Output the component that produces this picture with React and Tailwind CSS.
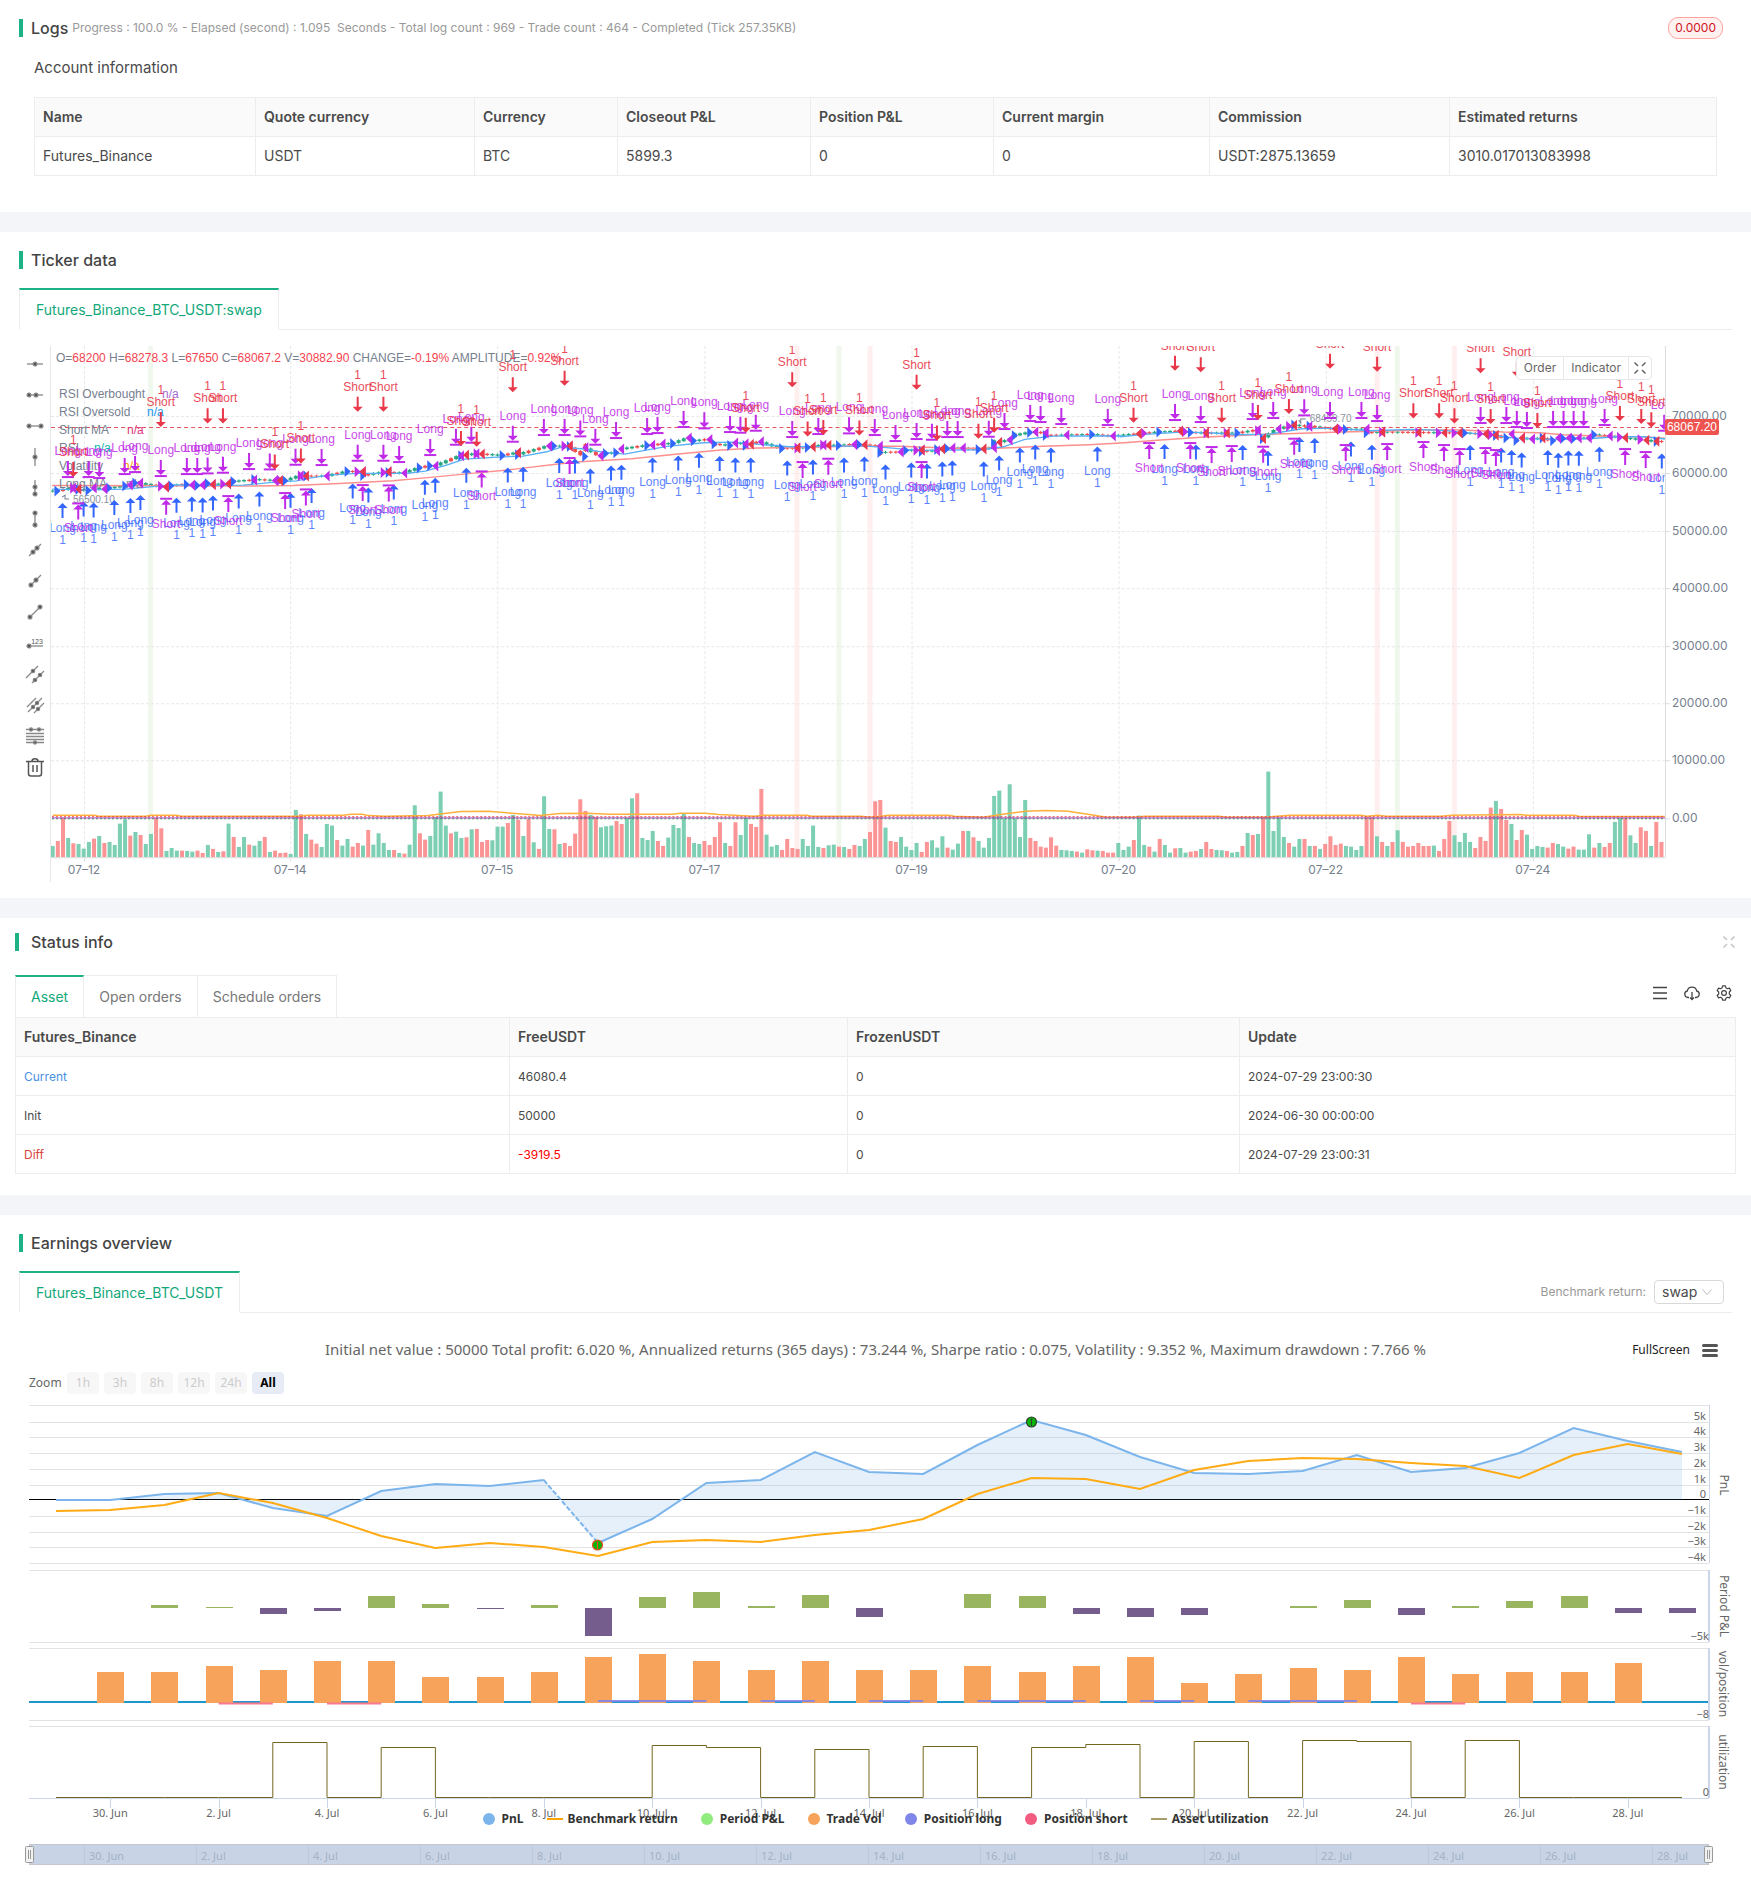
import React from "react";

const RED = "#e8384a";
const PURPLE = "#bf2be8";
const BLUE = "#3366ff";
const UP = "#26a981";
const DOWN = "#ef4f4f";

/* ---------- volume: bar tops, negative marks a falling candle ---------- */
const VOL_A = [
  918, -903, -834, 894, -910, 912, 926, 906, -896, 888, -909, 906, 915, 851, 838, -887, 876, -885, 912, 882,
  -834, -865, 933, 924, 932, -932, 933, 935, -932, -939, 915, -927, 936, -934, 851, -891, 921, 891, -914, 917,
  903, -891, 936, -932, -939, -938, 942, 810, -823, 882, -899, -911, 921, 852, 857, -900, 917, 897, -920, -909,
  917, -870, 914, 880, 909, 930, -930, 939, -941, 914, 796, -880, -899, 888, 832, 755, 857, -880, 875, 894,
  -892, 868, -867, -906, -900, 901, 860, 860, -849, 825, -839, 888, -837, 907, -927, 769, 867, -868, 912, -909,
  -918, -881, -778, -813, 825, -832, 862, 859, 857, -843, -852, 834, 775, -760, 894, 900, 873, -903, -918, 893,
  855, 864, 820, -891, 909, 912, -903, -915, -891, -847, 909, -918, -847, 885, 834, -852, -861, -747, 884, 920,
  915, -930, -897, -924, -927, 897, 918, 857, 921, -924, 916, 914, -920, 921, -927, -915, 918,
];
const VOL_B = [
  297, -276, -184, -180, 263, -303, -306, 291, 320, 330, 309, -336, -306, 301, 323, 289, -323, 329, 311, -273,
  273, -292, 303, 323, 294, 168, 152, 236, 133, 236, 291, 180, -294, -303, -320, -323, -292, -317, 330, 331,
  333, -335, 338, -328, -331, 332, -333, -338, -338, 309, 330, 320, -300, 227, 315, -320, 335, -297, 315, 338,
  -325, 324, 338, -335, -333, 327, -306, -327, 330, 331, -333, 338, 336, -318, 279, -285, 282, -230, 95, 273,
  233, 291, -309, 320, 297, -297, 318, -318, 327, -312, -289, -315, -311, 318, 320, 330, 318, -232, -232, 289,
  -306, 318, -306, 271, -306, -320, -318, -309, -318, -318, 317, -333, -297, -243, 286, 306, 279, 306, -324, -291,
  -303, -203, 183, -207, -240, 252, -300, -270, 284, 327, 318, 321, -323, -309, 312, 320, -326, -320, 329, 329,
  283, -323, 309, -321, -309, 246, 235, -235, 286, 309, -262, -273, 318, -246, -306,
];
const VOLUME = [
  ...VOL_A.map((v) => ({ h: (952 - Math.abs(v)) / 3, up: v > 0 })),
  ...VOL_B.map((v) => ({ h: (352 - Math.abs(v)) / 3, up: v > 0 })),
];
const barX = (i) => 52.65 + i * 5.17;

/* ---------- trades: three stretches of the time axis ---------- */
const STRETCH = [
  { x0: 0, k: 2.8 },
  { x0: 560, k: 2.8 },
  { x0: 1120, k: 2.485 },
];
const place = (lists, y0 = 340) =>
  lists.flatMap((list, s) => list.map(([x, y]) => [STRETCH[s].x0 + x / STRETCH[s].k, y0 + y / 3]));

const SHORT_ENTRY = place([
  [[205, 411], [450, 261], [581, 250], [624, 250], [769, 388], [842, 370], [1001, 215], [1073, 215], [1290, 318], [1334, 320], [1435, 157]],
  [[12, 137], [519, 278], [649, 142], [692, 289], [736, 285], [837, 286], [997, 149], [1054, 301], [1170, 296], [1214, 278]],
  [[32, 248], [135, 92], [199, 97], [251, 248], [341, 240], [418, 222], [520, 86], [637, 95], [727, 235], [791, 235], [829, 250], [894, 100], [919, 252], [984, 110], [1035, 264], [1240, 243], [1293, 252], [1318, 262]],
]);
const LONG_EXIT = place([
  [[190, 411], [248, 411], [278, 414], [349, 402], [378, 396], [450, 408], [523, 402], [552, 402], [581, 400], [624, 398], [697, 387], [755, 388], [827, 374], [900, 375], [1001, 362], [1073, 362], [1117, 366], [1204, 345], [1276, 314], [1319, 308], [1435, 305], [1522, 285]],
  [[12, 285], [56, 289], [98, 314], [156, 294], [243, 282], [272, 279], [345, 261], [403, 265], [475, 276], [504, 278], [547, 272], [649, 291], [722, 282], [808, 280], [880, 285], [938, 303], [997, 297], [1040, 299], [1083, 291], [1112, 291], [1199, 290], [1243, 267], [1315, 243], [1344, 246], [1402, 252], [1532, 255]],
  [[135, 240], [199, 246], [328, 237], [379, 234], [456, 226], [520, 234], [598, 234], [637, 243], [894, 249], [958, 249], [984, 261], [1009, 264], [1074, 261], [1100, 261], [1125, 261], [1150, 261], [1202, 255], [1350, 272]],
]);
const LONG_ENTRY = place([
  [[175, 489], [234, 484], [262, 487], [320, 480], [365, 474], [393, 465], [494, 473], [537, 469], [567, 472], [596, 466], [668, 460], [726, 454], [813, 458], [872, 444], [987, 430], [1031, 442], [1102, 433], [1189, 419], [1218, 413], [1305, 383], [1421, 382], [1464, 380], [1565, 354]],
  [[41, 355], [84, 385], [142, 376], [171, 374], [258, 352], [330, 346], [388, 338], [446, 348], [490, 352], [533, 352], [635, 361], [707, 358], [794, 352], [851, 349], [910, 373], [982, 367], [1026, 370], [1069, 364], [1097, 361], [1185, 364], [1228, 346], [1286, 322], [1329, 313], [1373, 322], [1503, 319]],
  [[109, 312], [187, 313], [303, 315], [366, 332], [444, 291], [482, 294], [572, 304], [624, 314], [868, 315], [945, 322], [971, 330], [996, 337], [1061, 330], [1087, 338], [1112, 331], [1138, 332], [1189, 320], [1344, 340]],
]);
const SHORT_EXIT = place([
  [[219, 490], [465, 476], [639, 468], [798, 459], [856, 448], [1015, 435], [1088, 436], [1348, 394]],
  [[26, 354], [678, 366], [750, 356], [1011, 366]],
  [[71, 309], [173, 309], [226, 321], [276, 318], [354, 320], [431, 296], [559, 315], [662, 312], [752, 306], [803, 315], [842, 327], [906, 324], [932, 330], [1253, 327], [1304, 336]],
]);
const LONG_MA = place([
  [[146, 436], [450, 437], [700, 438], [820, 436], [950, 430], [1100, 422], [1204, 412], [1320, 400], [1435, 388]],
  [[0, 371], [56, 365], [200, 356], [330, 342], [450, 330], [550, 324], [700, 322], [800, 319], [950, 319], [1100, 325], [1220, 325], [1350, 319], [1480, 314]],
  [[0, 309], [100, 300], [200, 292], [330, 284], [450, 280], [550, 276], [637, 274], [750, 270], [850, 270], [950, 276], [1040, 278], [1100, 284], [1200, 289], [1300, 291], [1353, 295]],
]);
const SHORT_MA = place([
  [[146, 447], [250, 449], [350, 447], [420, 440], [480, 434], [600, 436], [680, 435], [770, 426], [830, 422], [870, 413], [930, 404], [1000, 400], [1140, 400], [1190, 393], [1250, 375], [1300, 357], [1380, 352], [1464, 348], [1530, 335]],
  [[0, 322], [60, 326], [120, 336], [180, 342], [240, 330], [300, 319], [400, 308], [480, 306], [560, 313], [640, 320], [800, 318], [860, 318], [930, 324], [1000, 331], [1180, 329], [1240, 320], [1300, 298], [1380, 288], [1568, 287]],
  [[0, 290], [60, 283], [150, 276], [220, 278], [290, 284], [370, 282], [450, 266], [520, 264], [620, 272], [720, 268], [800, 271], [900, 283], [980, 294], [1080, 298], [1160, 296], [1230, 290], [1300, 290], [1353, 297]],
]);
const VOLATILITY = [
  ...[[96, 825], [172, 825], [180, 828], [265, 828], [275, 825], [322, 825], [330, 828], [545, 828], [560, 825], [625, 825], [640, 822], [660, 822], [668, 825], [700, 828], [780, 826], [810, 820], [840, 814], [890, 813], [940, 820], [985, 826], [1020, 820], [1070, 819], [1110, 822], [1225, 822], [1240, 819], [1285, 819], [1310, 823], [1375, 828], [1390, 825], [1470, 825], [1480, 828], [1560, 828]].map(([x, y]) => [x / 1.8233, 540 + y / 3]),
  ...[[0, 228], [20, 231], [50, 225], [155, 225], [165, 228], [215, 231], [250, 222], [290, 213], [325, 211], [365, 213], [400, 222], [430, 230], [480, 231], [500, 228], [630, 228], [645, 231], [710, 231], [755, 225], [880, 225], [890, 228], [910, 225], [925, 228], [1020, 228], [1040, 225], [1160, 223], [1170, 225], [1255, 225], [1265, 229], [1415, 229]].map(([x, y]) => [860 + x / 1.76, 740 + y / 3]),
];

/* close price, read back from where the trades sit */
const PRICE = [
  ...LONG_ENTRY.map(([x, y]) => [x - 5, y - 12]),
  ...LONG_EXIT.map(([x, y]) => [x + 5, y + 11]),
].sort((a, b) => a[0] - b[0]);
function priceAt(x) {
  if (x <= PRICE[0][0]) return PRICE[0][1];
  for (let i = 1; i < PRICE.length; i++) {
    if (x <= PRICE[i][0]) {
      const [ax, ay] = PRICE[i - 1];
      const [bx, by] = PRICE[i];
      return bx === ax ? by : ay + ((by - ay) * (x - ax)) / (bx - ax);
    }
  }
  return PRICE[PRICE.length - 1][1];
}

const pts = (list) => list.map(([x, y]) => `${x.toFixed(1)},${y.toFixed(1)}`).join(" ");
const DownArrow = ({ x, y, c }) => (
  <path d={`M${x - 1} ${y - 15}h2v10h4l-5 5l-5 -5h4z`} fill={c} />
);
const UpArrow = ({ x, y, c }) => (
  <path d={`M${x - 1} ${y + 15}h2v-10h4l-5 -5l-5 5h4z`} fill={c} />
);
const RightTri = ({ x, y, c }) => <path d={`M${x - 3} ${y - 5.5}l6 5.5l-6 5.5z`} fill={c} />;
const LeftTri = ({ x, y, c }) => <path d={`M${x + 3} ${y - 5.5}l-6 5.5l6 5.5z`} fill={c} />;

const TICKER_DATES = [[84, "07–12"], [290, "07–14"], [497, "07–15"], [704, "07–17"], [911, "07–19"], [1118, "07–20"], [1325, "07–22"], [1532, "07–24"]];
const TICKER_LEVELS = [[416, "70000.00"], [473, "60000.00"], [531, "50000.00"], [588, "40000.00"], [646, "30000.00"], [703, "20000.00"], [760, "10000.00"], [818, "0.00"]];
const BANDS = [[148, "#f0f8ee"], [794, "#ffefef"], [836, "#f0f8ee"], [867, "#ffefef"], [1374, "#ffefef"], [1394, "#f0f8ee"], [1451, "#ffefef"]];
const OHLC = [["O=", "68200"], [" H=", "68278.3"], [" L=", "67650"], [" C=", "68067.2"], [" V=", "30882.90"], [" CHANGE=", "-0.19%"], [" AMPLITUDE=", "0.92%"]];
const INDICATORS = [
  [394, "RSI Overbought", 162, "#a66bd3"],
  [412, "RSI Oversold", 147, "#2196f3"],
  [430, "Short MA", 127, "#e0367c"],
  [448, "RSI", 94, "#12b5b0"],
  [466, "Volatility", 123, "#ff9600"],
  [484, "Long MA", 126, "#8a7aa0"],
];

function TickerChart() {
  return (
    <svg viewBox="50 346 1681 536" className="block w-full" fontFamily='"Liberation Sans", Arial, sans-serif' fontSize="12" role="img" aria-label="BTC_USDT swap price chart">
      <defs>
        <clipPath id="plot"><rect x="51" y="346" width="1613" height="512" /></clipPath>
      </defs>
      {BANDS.map(([x, c]) => <rect key={x} x={x} y="346" width="5" height="511" fill={c} />)}
      <g stroke="#e8e8e8" strokeDasharray="3 2" fill="none">
        {TICKER_LEVELS.map(([y]) => <path key={y} d={`M51 ${y + 0.5}H1664`} />)}
        {TICKER_DATES.map(([x]) => <path key={x} d={`M${x + 0.5} 346V857`} />)}
      </g>
      <path d="M50.5 346V882" stroke="#e6e6e6" />
      <g clipPath="url(#plot)">
        {VOLUME.map((v, i) => (
          <rect key={i} x={barX(i) - 2} y={857 - v.h} width="4" height={v.h} fill={v.up ? "#7ccfb3" : "#fb9495"} />
        ))}
        <polyline points={pts(VOLATILITY)} fill="none" stroke="#fdb03c" strokeWidth="1.5" />
        <path d="M52 816.5H1664" stroke="#e84040" strokeDasharray="2 2" />
        <path d="M52 818.5H1664" stroke="#2f9e4f" strokeDasharray="2 2" />
        <path d="M52 817.5H1664" stroke="#a03bc0" strokeWidth="1.2" opacity="0.75" />
        {VOLUME.map((v, i) => {
          const x = barX(i);
          const y = priceAt(x);
          const body = Math.abs(priceAt(x + 2.5) - priceAt(x - 2.5)) + 1;
          return (
            <g key={i} fill={v.up ? UP : DOWN}>
              <rect x={x - 2} y={y - body / 2} width="4" height={body} />
              <rect x={x - 0.5} y={y - body / 2 - 1} width="1" height={body + 2} />
            </g>
          );
        })}
        <polyline points={pts(LONG_MA)} fill="none" stroke="#fd8f8c" strokeWidth="1.5" />
        <polyline points={pts(SHORT_MA)} fill="none" stroke="#58b0f5" strokeWidth="1.3" />
      </g>
      <path d="M51 427.5H1664" stroke="#e4555c" strokeDasharray="4 3" />
      <g fill="#76808f">
        <text x="56" y="362" xmlSpace="preserve">
          {OHLC.map(([k, v]) => (
            <React.Fragment key={k}><tspan>{k}</tspan><tspan fill="#f5434f">{v}</tspan></React.Fragment>
          ))}
        </text>
        {INDICATORS.map(([y, name, x, c]) => (
          <g key={name}>
            <text x="59" y={y + 4}>{name}</text>
            <text x={x} y={y + 4} fill={c}>n/a</text>
          </g>
        ))}
        <text x="73" y="503" fontSize="10" fill="#8b93a0">56500.10</text>
        <path d="M62 497l3 -2v4h4" fill="none" stroke="#76808f" />
        <text x="1309" y="422" fontSize="10" fill="#8b93a0">68459.70</text>
        <path d="M1298 420l2 3v-4h5" fill="none" stroke="#76808f" />
      </g>
      <g clipPath="url(#plot)" textAnchor="middle">
        {LONG_ENTRY.map(([x, y], i) => (
          <g key={i} fill={BLUE}>
            <RightTri x={x - 5} y={y - 12} c={BLUE} />
            <UpArrow x={x} y={y} c={BLUE} />
            <text x={x} y={y + 29} opacity="0.8">Long</text>
            <text x={x} y={y + 41} opacity="0.8">1</text>
          </g>
        ))}
        {SHORT_EXIT.map(([x, y], i) => (
          <g key={i} fill={PURPLE}>
            <RightTri x={x - 5} y={priceAt(x - 5)} c={PURPLE} />
            <rect x={x - 6} y={y - 1} width="12" height="2" />
            <UpArrow x={x} y={y + 1} c={PURPLE} />
            <text x={x} y={y + 29} opacity="0.85">Short</text>
          </g>
        ))}
        {LONG_EXIT.map(([x, y], i) => (
          <g key={i} fill={PURPLE}>
            <LeftTri x={x + 5} y={y + 11} c={PURPLE} />
            <rect x={x - 6} y={y - 1} width="12" height="2" />
            <DownArrow x={x} y={y - 1} c={PURPLE} />
            <text x={x} y={y - 22} opacity="0.85">Long</text>
          </g>
        ))}
        {SHORT_ENTRY.map(([x, y], i) => (
          <g key={i} fill={RED}>
            <LeftTri x={x + 5} y={priceAt(x + 5)} c={RED} />
            <DownArrow x={x} y={y} c={RED} />
            <text x={x} y={y - 21} opacity="0.9">Short</text>
            <text x={x} y={y - 33} opacity="0.9">1</text>
          </g>
        ))}
      </g>
      <path d="M51 857.5H1664.5M1664.5 346V857" stroke="#dcdcdc" fill="none" />
      <g fill="#76808f" fontFamily='Inter, "Liberation Sans", sans-serif'>
        {TICKER_LEVELS.map(([y, t]) => (
          <g key={t}>
            <path d={`M1665 ${y + 0.5}h4`} stroke="#dcdcdc" />
            <text x="1671" y={y + 4}>{t}</text>
          </g>
        ))}
        {TICKER_DATES.map(([x, t]) => (
          <g key={t}>
            <path d={`M${x + 0.5} 858v3`} stroke="#dcdcdc" />
            <text x={x} y="874" textAnchor="middle">{t}</text>
          </g>
        ))}
      </g>
      <rect x="1664" y="419" width="54" height="16" rx="2" fill="#ef5350" />
      <text x="1666" y="431" fill="#fff">68067.20</text>
    </svg>
  );
}

/* ---------- drawing tools ---------- */
const TOOLS = [
  ["Horizontal line", <><path d="M2 10h16" /><circle cx="10" cy="10" r="1.9" /></>],
  ["Horizontal ray", <><path d="M3 10h15" /><circle cx="4" cy="10" r="1.9" /><circle cx="11" cy="10" r="1.9" /></>],
  ["Horizontal segment", <><path d="M3 10h14" /><circle cx="4" cy="10" r="1.9" /><circle cx="16" cy="10" r="1.9" /></>],
  ["Vertical line", <><path d="M10 1v18" /><circle cx="10" cy="10" r="1.9" /></>],
  ["Vertical ray", <><path d="M10 2v15" /><circle cx="10" cy="9" r="1.9" /><circle cx="10" cy="16" r="1.9" /></>],
  ["Vertical segment", <><path d="M10 4v13" /><circle cx="10" cy="4" r="1.9" /><circle cx="10" cy="16" r="1.9" /></>],
  ["Straight line", <><path d="M4 16L16 4" /><circle cx="8" cy="12" r="1.9" /><circle cx="12" cy="8" r="1.9" /></>],
  ["Ray", <><path d="M5 15L16 4" /><circle cx="6" cy="14" r="1.9" /><circle cx="11" cy="9" r="1.9" /></>],
  ["Segment", <><path d="M5 15L15 5" /><circle cx="5" cy="15" r="1.9" /><circle cx="15" cy="5" r="1.9" /></>],
  ["Price line", <><path d="M3 13h15" /><circle cx="4" cy="13" r="1.9" /><text x="12" y="11" fontSize="7" stroke="none" textAnchor="middle" fontFamily="Liberation Sans">123</text></>],
  ["Price channel", <><path d="M1 14L13 2M7 19L19 7" /><circle cx="8" cy="7" r="1.7" /><circle cx="10" cy="16" r="1.7" /><circle cx="15" cy="11" r="1.7" /></>],
  ["Parallel lines", <><path d="M2 12L11 3M3 17L17 3M9 18L19 8" /><circle cx="8" cy="12" r="1.6" /><circle cx="12" cy="8" r="1.6" /><circle cx="13" cy="14" r="1.6" /></>],
  ["Fibonacci lines", <><path d="M1 3.5h18M1 7.5h18M1 10.5h18M1 13.500h18M1 16.500h18" /><circle cx="6" cy="3.5" r="1.5" /><circle cx="14" cy="3.5" r="1.5" /><circle cx="10" cy="16.500" r="1.5" /></>],
  ["Remove drawings", <path d="M1 4.5h18M7 4c0-3 6-3 6 0M3.5 5v11.500q0 2.500 2.500 2.500h8q2.500 0 2.500-2.500V5M8 8v7M12 8v7" fill="none" stroke="#555" strokeWidth="1.500" />],
];

function Heading({ children, className = "" }) {
  return (
    <div className={"flex h-[18px] items-center border-l-4 border-[#1db286] text-base font-medium text-[#444] " + className}>
      {children}
    </div>
  );
}

const ExpandIcon = ({ className }) => (
  <svg viewBox="0 0 14 14" className={className} fill="none" stroke="currentColor" strokeWidth="1.500">
    <path d="M1.500 1.500L5 5M12.500 1.500L9 5M1.500 12.500L5 9M12.500 12.500L9 9" />
  </svg>
);

const ACCOUNT = [
  ["Name", "Futures_Binance", "w-[221px]"],
  ["Quote currency", "USDT", "w-[219px]"],
  ["Currency", "BTC", "w-[143px]"],
  ["Closeout P&L", "5899.3", "w-[193px]"],
  ["Position P&L", "0", "w-[183px]"],
  ["Current margin", "0", "w-[216px]"],
  ["Commission", "USDT:2875.13659", "w-[240px]"],
  ["Estimated returns", "3010.017013083998", ""],
];

const STATUS = [
  ["Current", "46080.4", "0", "2024-07-29 23:00:30", "text-[#4a90e2]", ""],
  ["Init", "50000", "0", "2024-06-30 00:00:00", "", ""],
  ["Diff", "-3919.5", "0", "2024-07-29 23:00:31", "text-[#d9453d]", "text-[#ff0000]"],
];

/* ---------- earnings ---------- */
const DAY = 54.2;
const dayX = (i) => 56 + DAY * i;
const PNL = [1500, 1500, 1494, 1493, 1508, 1516, 1491, 1484, 1486, 1480, 1543, 1519, 1483, 1480, 1452, 1472, 1474, 1445, 1420, 1435, 1457, 1473, 1474, 1471, 1455, 1472, 1468, 1453, 1428, 1441, 1452];
const BENCH = [1511, 1510, 1505, 1493, 1503, 1518, 1536, 1548, 1543, 1547, 1556, 1542, 1540, 1542, 1535, 1530, 1519, 1494, 1478, 1479, 1489, 1470, 1461, 1458, 1459, 1463, 1466, 1478, 1455, 1444, 1454];
const PERIOD = [0, 0, 3, 1, -6, -3, 12, 4, -1, 3, -28, 11, 16, 2, 13, -9, 0, 14, 12, -6, -9, -7, 0, 2, 8, -7, 2, 7, 12, -5, -5];
const TRADES = [0, 30, 30, 36, 32, 41, 41, 25, 25, 30, 45, 48, 41, 32, 41, 32, 32, 36, 30, 36, 45, 19, 28, 34, 32, 45, 28, 30, 30, 39, 0];
const UTIL = [0, 0, 0, 0, 55, 0, 50, 0, 0, 0, 0, 52, 50, 0, 48, 0, 51, 0, 50, 53, 0, 56, 0, 57, 56, 0, 57, 0, 0, 0, 0];
const LEVELS = [1405, 1422, 1437, 1453, 1469, 1485, 1516, 1532, 1547, 1563, 1570, 1642, 1648, 1720, 1726];
const PNL_LABELS = [[1416, "5k"], [1431, "4k"], [1447, "3k"], [1463, "2k"], [1479, "1k"], [1494, "0"], [1510, "−1k"], [1526, "−2k"], [1541, "−3k"], [1557, "−4k"]];
const DATES = ["30. Jun", "2. Jul", "4. Jul", "6. Jul", "8. Jul", "10. Jul", "12. Jul", "14. Jul", "16. Jul", "18. Jul", "20. Jul", "22. Jul", "24. Jul", "26. Jul", "28. Jul"];
const AXIS_TITLES = [[1724, 1485, "PnL"], [1724, 1606, "Period P&L"], [1723, 1684, "vol/position"], [1723, 1762, "utilization"]];

function Pin({ x, y, ring }) {
  return (
    <g>
      <circle cx={x} cy={y} r="5" fill="#0ab50a" stroke={ring} strokeWidth="1.200" />
      <path d={`M${x} ${y - 3}v7M${x - 1} ${y - 3}h2`} stroke={ring} />
    </g>
  );
}

function EarningsChart() {
  const pnl = PNL.map((y, i) => [dayX(i), y]);
  let util = `M${dayX(0)} 1797.500`;
  UTIL.forEach((v, i) => {
    util += `V${1797.5 - v}`;
    if (i < 30) util += `H${dayX(i + 1)}`;
  });
  return (
    <svg viewBox="0 1400 1751 494" className="block w-full" fontFamily='"Noto Sans", "Open Sans", sans-serif' fontSize="11" fill="#666" role="img" aria-label="Earnings chart">
      {LEVELS.map((y) => <path key={y} d={`M29 ${y + 0.5}H1709`} stroke="#e3e3e3" />)}
      <path d="M29 1499.500H1709" stroke="#000" />
      <polygon points={`56,1499.5 ${pts(pnl)} 1682,1499.5`} fill="#7cb5ec" fillOpacity="0.2" />
      <g fill="none" strokeWidth="2" stroke="#7cb5ec">
        <polyline points={pts(pnl.slice(0, 10))} />
        <polyline points={pts(pnl.slice(9, 11))} strokeDasharray="5 2" />
        <polyline points={pts(pnl.slice(10))} />
        <polyline points={pts(BENCH.map((y, i) => [dayX(i), y]))} stroke="#ffab14" />
      </g>
      <Pin x={597.5} y={1545} ring="#ee4a20" />
      <Pin x={1031.5} y={1422} ring="#2f4030" />
      {PERIOD.map((v, i) => v !== 0 && (
        <rect key={i} x={Math.round(dayX(i) - 13)} y={v > 0 ? 1608 - v : 1608} width="27" height={Math.abs(v)} fill={v > 0 ? "#99b55f" : "#755d8e"} />
      ))}
      <path d="M29 1702H1709" stroke="#2196cb" strokeWidth="2" />
      {TRADES.map((v, i) => v > 0 && (
        <rect key={i} x={Math.round(dayX(i) - 13)} y={1702 - v} width="27" height={v + 1} fill="#f7a35c" />
      ))}
      {[[10, 12], [13, 14], [15, 16], [17, 19], [20, 21], [22, 24]].map(([a, b]) => (
        <path key={a} d={`M${dayX(a)} 1701H${dayX(b)}`} stroke="#8085e9" strokeWidth="2" opacity="0.900" />
      ))}
      {[[3, 4], [5, 6], [25, 26]].map(([a, b]) => (
        <path key={a} d={`M${dayX(a)} 1703.500H${dayX(b)}`} stroke="#f7798f" strokeWidth="2" />
      ))}
      <path d="M29 1798.500H1709" stroke="#ccd6eb" />
      <path d={util} fill="none" stroke="#73661f" />
      <path d="M1709.500 1405V1563" stroke="#ccd6eb" />
      <path d="M1709 1570V1642M1709 1648V1720M1709 1726V1798" stroke="#ccd6eb" strokeWidth="2" />
      <g textAnchor="end">
        {PNL_LABELS.map(([y, t]) => <text key={t} x="1706" y={y + 4}>{t}</text>)}
        <text x="1709" y="1640">−5k</text>
        <text x="1709" y="1718">−8</text>
        <text x="1709" y="1796">0</text>
      </g>
      {AXIS_TITLES.map(([x, y, t]) => (
        <text key={t} transform={`translate(${x - 4} ${y}) rotate(90)`} textAnchor="middle" fontSize="12">{t}</text>
      ))}
      {DATES.map((t, k) => (
        <g key={t} textAnchor="middle">
          <path d={`M${Math.round(dayX(2 * k + 1)) + 0.5} 1799v9`} stroke="#ccd6eb" />
          <text x={dayX(2 * k + 1)} y="1817">{t}</text>
        </g>
      ))}
      <rect x="29.500" y="1844.500" width="1679" height="20" fill="#c8d4e6" stroke="#c4c8ce" />
      {DATES.map((t, k) => (
        <g key={t}>
          <path d={`M${84.5 + 112 * k} 1845v19`} stroke="#bccadd" />
          <text x={89 + 112 * k} y="1860" fill="#a5b1c4">{t}</text>
        </g>
      ))}
      {[29, 1708].map((x) => (
        <g key={x} stroke="#999">
          <rect x={x - 3.5} y="1846.500" width="8" height="16" rx="1" fill="#f2f2f2" />
          <path d={`M${x - 0.5} 1850v9M${x + 1.5} 1850v9`} />
        </g>
      ))}
    </svg>
  );
}

const LEGEND = [
  ["PnL", "bg-[#7cb5ec]", true],
  ["Benchmark return", "bg-[#ffa500]", false],
  ["Period P&L", "bg-[#90ed7d]", true],
  ["Trade Vol", "bg-[#f7a35c]", true],
  ["Position long", "bg-[#8085e9]", true],
  ["Position short", "bg-[#f15c80]", true],
  ["Asset utilization", "bg-[#a89c6a]", false],
];

export default function App() {
  return (
    <main className="flex flex-col gap-5 bg-[#f4f5f8] font-[Inter,'Liberation_Sans',sans-serif] text-sm text-[#4a4a4a]">
      <section className="bg-white pt-[19px] pb-9">
        <div className="flex h-[18px] items-center justify-between pr-7 pl-[19px]">
          <Heading className="gap-1 pl-2">
            Logs
            <span className="text-xs font-normal whitespace-pre text-[#999]">Progress : 100.0 % - Elapsed (second) : 1.095  Seconds - Total log count : 969 - Trade count : 464 - Completed (Tick 257.35KB)</span>
          </Heading>
          <span className="h-[22px] rounded-[10px] border border-[#ffa39e] bg-[#fff1f0] px-[6px] text-xs leading-5 text-[#cf1322]">0.0000</span>
        </div>
        <div className="px-[34px]">
          <h2 className="pt-[19px] pb-[17px] text-[15px] leading-6">Account information</h2>
          <table className="w-full table-fixed border-collapse text-left">
            <thead>
              <tr className="h-[39px] bg-[#fafafa]">
                {ACCOUNT.map(([h, , w]) => <th key={h} className={"border border-[#ededed] px-2 font-semibold " + w}>{h}</th>)}
              </tr>
            </thead>
            <tbody>
              <tr className="h-[39px]">
                {ACCOUNT.map(([h, v]) => <td key={h} className="border border-[#ededed] px-2">{v}</td>)}
              </tr>
            </tbody>
          </table>
        </div>
      </section>

      <section className="bg-white px-[19px] pt-[19px] pb-4">
        <Heading className="pl-2">Ticker data</Heading>
        <div className="mt-[19px] mb-4 flex h-[42px] border-b border-[#ededed]">
          <button className="-mb-px border-x border-t-2 border-b border-x-[#ededed] border-t-[#1db286] border-b-white px-4 text-[#12a87a]">Futures_Binance_BTC_USDT:swap</button>
        </div>
        <div className="relative flex">
          <div className="flex w-[31px] shrink-0 flex-col items-center gap-[11px] pt-2">
            {TOOLS.map(([name, art]) => (
              <button key={name} aria-label={name} className="h-5 w-5">
                <svg viewBox="0 0 20 20" className="h-5 w-5" stroke="#888" strokeWidth="1.300">
                  <g fill="#555">{art}</g>
                </svg>
              </button>
            ))}
          </div>
          <div className="min-w-0 grow"><TickerChart /></div>
          <div className="absolute top-[10px] right-20 flex h-6 divide-x divide-gray-200 rounded-sm border border-gray-200 bg-white text-xs text-[#666]">
            <button className="px-[7px]">Order</button>
            <button className="px-[7px]">Indicator</button>
            <button aria-label="Full screen" className="px-1"><ExpandIcon className="h-[14px] w-[14px]" /></button>
          </div>
        </div>
      </section>

      <section className="bg-white px-[15px] pt-[15px] pb-[21px]">
        <div className="flex h-[18px] items-center justify-between">
          <Heading className="pl-3">Status info</Heading>
          <button aria-label="Expand" className="text-[#c4c4c4]"><ExpandIcon className="h-[14px] w-[14px]" /></button>
        </div>
        <div className="mt-6 flex h-[42px] justify-between">
          <div className="flex text-[#777]">
            <button className="border-x border-t-2 border-x-[#ededed] border-t-[#1db286] px-[15px] text-[#12a87a]">Asset</button>
            <button className="border-t border-r border-[#ededed] px-[15px]">Open orders</button>
            <button className="border-t border-r border-[#ededed] px-[15px]">Schedule orders</button>
          </div>
          <div className="flex items-center gap-4 pr-1 pb-[7px] text-[#444]">
            <button aria-label="List">
              <svg viewBox="0 0 16 16" className="h-4 w-4" stroke="currentColor" strokeWidth="1.500"><path d="M1 2.500h14M1 8h14M1 13.500h14" /></svg>
            </button>
            <button aria-label="Download">
              <svg viewBox="0 0 16 16" className="h-4 w-4" fill="none" stroke="currentColor" strokeWidth="1.300"><path d="M5 12.500H4A3.300 3.300 0 0 1 3.300 6a4.800 4.800 0 0 1 9.400 0A3.300 3.300 0 0 1 12 12.500h-1M8 7v7.500M6 12.500l2 2l2 -2" /></svg>
            </button>
            <button aria-label="Settings">
              <svg viewBox="0 0 16 16" className="h-4 w-4" fill="none" stroke="currentColor" strokeWidth="1.200" strokeLinejoin="round"><path d="M6.600 .8h2.800l.5 2 1.500.9 2-.6 1.400 2.400-1.500 1.500v2l1.500 1.500-1.400 2.400-2-.6-1.500.9-.5 2H6.600l-.5-2-1.500-.9-2 .6-1.400-2.400L2.700 9V7L1.200 5.500l1.400-2.400 2 .6 1.500-.9z" /><circle cx="8" cy="8" r="2.400" /></svg>
            </button>
          </div>
        </div>
        <table className="w-full table-fixed border-collapse text-left">
          <thead>
            <tr className="h-[39px] bg-[#fafafa]">
              <th className="w-[494px] border border-[#ededed] px-2 font-semibold">Futures_Binance</th>
              <th className="w-[338px] border border-[#ededed] px-2 font-semibold">FreeUSDT</th>
              <th className="w-[392px] border border-[#ededed] px-2 font-semibold">FrozenUSDT</th>
              <th className="border border-[#ededed] px-2 font-semibold">Update</th>
            </tr>
          </thead>
          <tbody className="text-xs">
            {STATUS.map(([n, free, frozen, upd, c1, c2]) => (
              <tr key={n} className="h-[39px]">
                <td className={"border border-[#ededed] px-2 pt-[2px] " + c1}>{n}</td>
                <td className={"border border-[#ededed] px-2 pt-[2px] " + c2}>{free}</td>
                <td className="border border-[#ededed] px-2 pt-[2px]">{frozen}</td>
                <td className="border border-[#ededed] px-2 pt-[2px]">{upd}</td>
              </tr>
            ))}
          </tbody>
        </table>
      </section>

      <section className="bg-white pt-[19px]">
        <div className="px-[19px]">
          <Heading className="pl-2">Earnings overview</Heading>
          <div className="mt-[19px] flex h-[42px] justify-between border-b border-[#ededed]">
            <button className="-mb-px border-x border-t-2 border-b border-x-[#ededed] border-t-[#1db286] border-b-white px-4 text-[#12a87a]">Futures_Binance_BTC_USDT</button>
            <label className="flex items-center gap-2 pr-2 text-xs text-[#999]">
              Benchmark return:
              <span className="relative block">
                <select defaultValue="swap" className="h-6 w-[70px] appearance-none rounded border border-[#d9d9d9] bg-white pl-[7px] text-sm text-[#4a4a4a]">
                  <option>swap</option>
                </select>
                <svg viewBox="0 0 12 12" className="pointer-events-none absolute top-[6px] right-[11px] h-3 w-3" fill="none" stroke="#bbb"><path d="M1.500 3.500L6 8.500L10.500 3.500" /></svg>
              </span>
            </label>
          </div>
        </div>
        <div className="font-['Noto_Sans','Open_Sans',sans-serif] text-xs text-[#666]">
          <div className="mt-6 grid h-6 grid-cols-[1fr_auto_1fr] items-center px-[29px]">
            <span />
            <p className="text-[15px] whitespace-nowrap">Initial net value : 50000 Total profit: 6.020 %, Annualized returns (365 days) : 73.244 %, Sharpe ratio : 0.075, Volatility : 9.352 %, Maximum drawdown : 7.766 %</p>
            <div className="flex items-center justify-end gap-3 pt-[2px] pr-1 text-[#222]">
              <button>FullScreen</button>
              <button aria-label="Chart menu" className="flex w-4 flex-col gap-[2px]">
                <span className="h-[3px] rounded-full bg-[#555]" />
                <span className="h-[3px] rounded-full bg-[#555]" />
                <span className="h-[3px] rounded-full bg-[#555]" />
              </button>
            </div>
          </div>
          <div className="mt-[11px] mb-[6px] flex h-[22px] items-center gap-[5px] px-[29px]">
            <span className="w-[33px]">Zoom</span>
            {["1h", "3h", "8h", "12h", "24h"].map((t) => (
              <button key={t} disabled className="h-[22px] w-8 rounded-sm bg-[#f7f7f7] text-[#ccc]">{t}</button>
            ))}
            <button className="h-[22px] w-8 rounded-sm bg-[#e6ebf5] font-bold text-black">All</button>
          </div>
          <div className="relative">
            <EarningsChart />
            <div className="absolute inset-x-0 bottom-[67px] flex justify-center gap-[23px] font-bold text-[#333]">
              {LEGEND.map(([t, c, dot]) => (
                <button key={t} className={"flex items-center " + (dot ? "gap-[7px]" : "gap-[5px]")}>
                  <span className={(dot ? "h-3 w-3 rounded-full " : "h-[2px] w-4 ") + c} />
                  {t}
                </button>
              ))}
            </div>
          </div>
        </div>
      </section>
    </main>
  );
}
